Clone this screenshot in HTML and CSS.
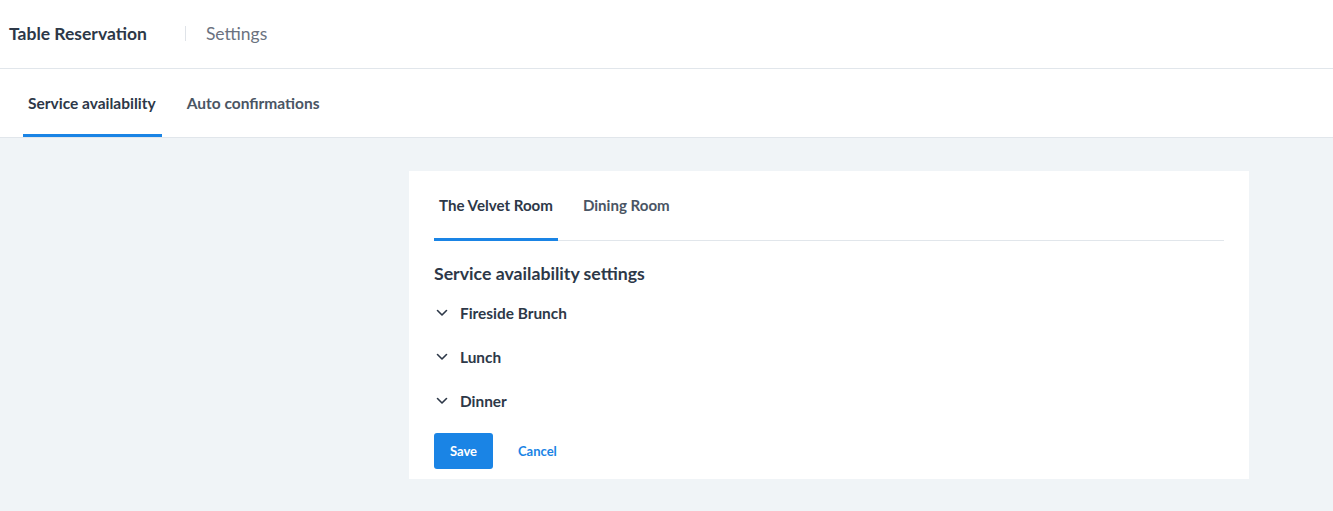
FILE: index.html
```html
<!DOCTYPE html>
<html>
<head>
<meta charset="utf-8">
<link rel="stylesheet" href="styles.css">
</head>
<body>
<header class="topbar">
  <div class="app-title">Table Reservation</div>
  <div class="sep"></div>
  <div class="crumb">Settings</div>
</header>
<nav class="tabs main-tabs">
  <div class="tab active">Service availability</div>
  <div class="tab">Auto confirmations</div>
</nav>
<main class="content">
  <section class="card">
    <nav class="tabs room-tabs">
      <div class="tab active">The Velvet Room</div>
      <div class="tab">Dining Room</div>
    </nav>
    <h2 class="section-title">Service availability settings</h2>
    <ul class="services">
      <li class="service"><svg class="chev" viewBox="0 0 12 8" width="12" height="8"><path d="M1.5 1.5 L6 6 L10.5 1.5" fill="none" stroke="#2d3848" stroke-width="1.6" stroke-linecap="round" stroke-linejoin="round"/></svg><span>Fireside Brunch</span></li>
      <li class="service"><svg class="chev" viewBox="0 0 12 8" width="12" height="8"><path d="M1.5 1.5 L6 6 L10.5 1.5" fill="none" stroke="#2d3848" stroke-width="1.6" stroke-linecap="round" stroke-linejoin="round"/></svg><span>Lunch</span></li>
      <li class="service"><svg class="chev" viewBox="0 0 12 8" width="12" height="8"><path d="M1.5 1.5 L6 6 L10.5 1.5" fill="none" stroke="#2d3848" stroke-width="1.6" stroke-linecap="round" stroke-linejoin="round"/></svg><span>Dinner</span></li>
    </ul>
    <div class="actions">
      <button class="btn-primary">Save</button>
      <button class="btn-link">Cancel</button>
    </div>
  </section>
</main>
</body>
</html>
```
FILE: styles.css
```css
* { box-sizing: border-box; }
html, body { margin: 0; padding: 0; }
body {
  font-family: Lato, "Open Sans", sans-serif;
  color: #2d3848;
  background: #f0f4f7;
  min-height: 511px;
}
.topbar {
  height: 69px;
  background: #fff;
  border-bottom: 1px solid #e1e6eb;
  display: flex;
  align-items: center;
  padding-left: 9px;
  padding-bottom: 2px;
}
.app-title {
  font-size: 17.5px;
  font-weight: 700;
  color: #2d3848;
}
.sep {
  width: 1px;
  height: 15px;
  background: #dfe3e8;
  margin-left: 38px;
  margin-right: 20px;
}
.crumb {
  font-size: 17.5px;
  color: #6b7280;
}
.tabs {
  display: flex;
}
.main-tabs {
  background: #fff;
  height: 69px;
  border-bottom: 1px solid #e1e6eb;
  padding-left: 23px;
}
.tab {
  font-size: 15.5px;
  font-weight: 700;
  color: #4a5564;
  padding: 0 5px;
  display: flex;
  align-items: center;
  border-bottom: 3px solid transparent;
  margin-right: 20px;
}
.tab.active {
  color: #2d3848;
  border-bottom-color: #1a84e5;
}
.main-tabs .tab { padding: 3px 6px 0 5px; margin-right: 20px; }
.content {
  padding: 33px 84px 32px 409px;
}
.card {
  background: #fff;
  width: 840px;
  padding: 0 25px 10px 25px;
}
.room-tabs {
  height: 70px;
  border-bottom: 1px solid #e1e6eb;
}
.room-tabs .tab {
  font-size: 15.1px;
  padding-top: 1px;
  margin-bottom: -1px;
}
.section-title {
  margin: 0;
  font-size: 17.7px;
  font-weight: 700;
  line-height: 22px;
  padding-top: 22px;
  color: #2d3848;
}
.services {
  list-style: none;
  margin: 0;
  padding: 6px 0 0 0;
}
.service {
  height: 44px;
  display: flex;
  align-items: center;
  font-size: 15.4px;
  font-weight: 700;
  color: #2d3848;
}
.chev {
  margin-left: 2px;
  margin-right: 12px;
}
.actions {
  display: flex;
  align-items: center;
  padding-top: 10px;
}
.btn-primary {
  height: 36px;
  width: 59px;
  background: #1a84e5;
  border: none;
  border-radius: 3px;
  color: #fff;
  font-family: inherit;
  font-size: 13px;
  font-weight: 700;
}
.btn-link {
  background: none;
  border: none;
  color: #1a84e5;
  font-family: inherit;
  font-size: 13px;
  font-weight: 700;
  margin-left: 19px;
  padding: 0 6px;
}
```
